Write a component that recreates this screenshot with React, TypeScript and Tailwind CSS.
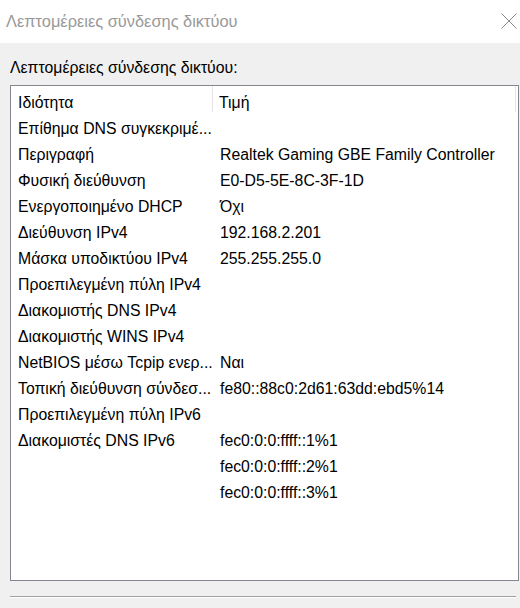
import React from 'react';

// Details rows shown in the list view
const rows: [string, string][] = [
  ['Επίθημα DNS συγκεκριμέ...', ''],
  ['Περιγραφή', 'Realtek Gaming GBE Family Controller'],
  ['Φυσική διεύθυνση', 'E0-D5-5E-8C-3F-1D'],
  ['Ενεργοποιημένο DHCP', 'Όχι'],
  ['Διεύθυνση IPv4', '192.168.2.201'],
  ['Μάσκα υποδικτύου IPv4', '255.255.255.0'],
  ['Προεπιλεγμένη πύλη IPv4', ''],
  ['Διακομιστής DNS IPv4', ''],
  ['Διακομιστής WINS IPv4', ''],
  ['NetBIOS μέσω Tcpip ενερ...', 'Ναι'],
  ['Τοπική διεύθυνση σύνδεσ...', 'fe80::88c0:2d61:63dd:ebd5%14'],
  ['Προεπιλεγμένη πύλη IPv6', ''],
  ['Διακομιστές DNS IPv6', 'fec0:0:0:ffff::1%1'],
  ['', 'fec0:0:0:ffff::2%1'],
  ['', 'fec0:0:0:ffff::3%1'],
];

export default function App() {
  return (
    <div
      className="w-[520px] h-[608px] bg-[#f0f0f0] flex flex-col overflow-hidden text-black"
      style={{ fontFamily: '"Liberation Sans", Arial, sans-serif' }}
    >
      {/* Title bar */}
      <div className="h-[43px] bg-white flex items-center justify-between pl-[6px] pr-[3px] shrink-0">
        <span className="text-[16.4px] text-[#999999] leading-[22px] mt-[-1px]">
          Λεπτομέρειες σύνδεσης δικτύου
        </span>
        <svg width="16" height="16" viewBox="0 0 16 16" className="mt-[-1px]">
          <path d="M0.5 0.5 L15.5 15.5 M15.5 0.5 L0.5 15.5" stroke="#8a8a8a" strokeWidth="1" fill="none" />
        </svg>
      </div>

      <div className="pl-[10px] pt-[15px] text-[15.8px] leading-[20px]">Λεπτομέρειες σύνδεσης δικτύου:</div>

      {/* List view */}
      <div className="mt-[7px] ml-[10px] mr-[1px] h-[496px] border border-[#828790] bg-white text-[15.8px] leading-[20px] overflow-hidden">
        <div className="h-[27px] flex">
          <div className="w-[202px] pl-[7px] pt-[7px] border-r border-[#e5e5e5] h-[26px]">Ιδιότητα</div>
          <div className="w-[303px] pl-[6px] pt-[7px] border-r border-[#e5e5e5] h-[26px]">Τιμή</div>
        </div>
        <div className="pt-[2px]">
          {rows.map(([k, v], i) => (
            <div key={i} className="h-[26px] flex pt-[4px]">
              <div className="w-[202px] pl-[7px] whitespace-nowrap overflow-hidden">{k}</div>
              <div className="pl-[7px] whitespace-nowrap">{v}</div>
            </div>
          ))}
        </div>
      </div>

      {/* Etched separator */}
      <div className="mt-[15px] ml-[10px] mr-[4px] h-px bg-[#a0a0a0] border-b border-white box-content" />
    </div>
  );
}
